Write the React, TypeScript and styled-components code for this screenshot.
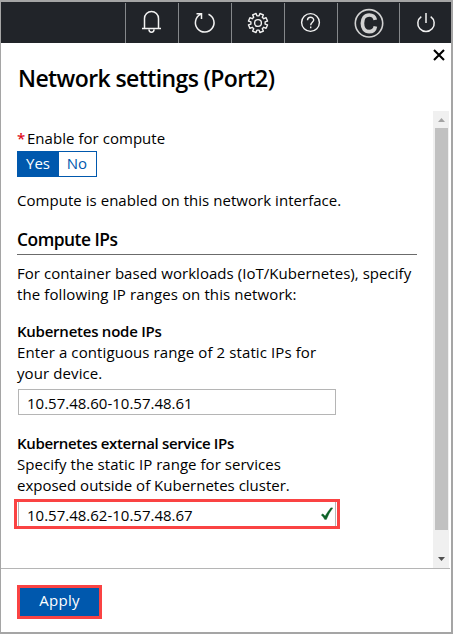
import React from "react";
import styled, { createGlobalStyle } from "styled-components";

const GlobalStyle = createGlobalStyle`
  * { box-sizing: border-box; }
  body { margin: 0; background: #fff; }
`;

const Frame = styled.div`
  width: 453px;
  height: 634px;
  display: flex;
  flex-direction: column;
  border: solid #a5a5a5;
  border-width: 2px 2px 2px 1px;
  background: #fff;
  color: #000;
  font: 15px/21px "Open Sans", "Noto Sans", sans-serif;
  overflow: hidden;
`;

const TopBar = styled.nav`
  height: 41px;
  flex: none;
  display: flex;
  justify-content: flex-end;
  background: #212429;
`;

const BarItem = styled.div<{ $width: number }>`
  width: ${(p) => p.$width}px;
  height: 40px;
  margin-top: 1px;
  border-left: 1px solid #85888b;
  svg { display: block; }
`;

const Header = styled.header`
  height: 68px;
  flex: none;
  display: flex;
  justify-content: space-between;
  padding: 5px 5px 0 17px;
`;

const Title = styled.h1<{ $spacing: number }>`
  margin: 13px 0 0;
  font-size: 23px;
  line-height: 34px;
  font-weight: 600;
  letter-spacing: ${(p) => p.$spacing}px;
  white-space: nowrap;
`;

const Scroller = styled.main`
  height: 457px;
  flex: none;
  display: flex;
  justify-content: space-between;
  padding-right: 1px;
`;

const Content = styled.div`
  width: 416px;
  padding: 17px 0 0 16px;
`;

const Line = styled.div<{ $spacing?: number; $bold?: boolean }>`
  height: 21px;
  white-space: nowrap;
  letter-spacing: ${(p) => p.$spacing ?? (p.$bold ? -0.34 : 0.04)}px;
  font-weight: ${(p) => (p.$bold ? 600 : 400)};
`;

const Required = styled.span`
  color: #e00b1c;
  display: inline-block;
  width: 10px;
  font-weight: 600;
`;

const Toggle = styled.div`
  width: 80px;
  height: 26px;
  margin: 2px 0 13px;
  display: flex;
  border: 1px solid #0058ad;
`;

const Option = styled.div<{ $active?: boolean }>`
  width: ${(p) => (p.$active ? 41 : 37)}px;
  height: 24px;
  padding-right: 1px;
  line-height: 22px;
  text-align: center;
  color: ${(p) => (p.$active ? "#fff" : "#0058ad")};
  background: ${(p) => (p.$active ? "#0058ad" : "#fff")};
`;

const Section = styled.h2<{ $spacing: number }>`
  width: 400px;
  height: 27px;
  margin: 17px 0 8px;
  border-bottom: 1px solid #6b6b6b;
  font-size: 17.4px;
  line-height: 22px;
  font-weight: 600;
  letter-spacing: ${(p) => p.$spacing}px;
`;

const Group = styled.section<{ $gap?: number }>`
  margin-top: ${(p) => p.$gap ?? 16}px;
`;

const Field = styled.div`
  width: 318px;
  height: 26px;
  margin: 5px 0 0 1px;
  padding: 0 2px 0 8px;
  display: flex;
  justify-content: space-between;
  border: 1px solid #b5b5b5;
  line-height: 27px;
`;

const Highlight = styled.div`
  width: 326px;
  height: 30px;
  margin: 3px 0 0 -3px;
  border: 3px solid #fa4343;
  padding: 0 1px;
`;

const HighlightedField = styled(Field)`
  height: 24px;
  margin: 0;
  border-width: 0 1px;
`;

const Track = styled.div`
  width: 16px;
  height: 457px;
  margin-right: 1px;
  background: #f0f0f0;
  display: flex;
  flex-direction: column;
`;

const Thumb = styled.div`
  width: 13px;
  height: 402px;
  background: #c1c1c1;
  margin-left: 2px;
`;

const Footer = styled.footer`
  flex: 1;
  margin-right: 1px;
  padding: 16px 0 0 16px;
  border-top: 1px solid #b5b5b5;
`;

const ApplyButton = styled.button`
  display: block;
  width: 85px;
  height: 34px;
  padding: 0 0 3px;
  border: 3px solid #fa4343;
  border-radius: 0;
  background: #0058ad;
  color: #fff;
  font: 15px/25px "Open Sans", "Noto Sans", sans-serif;
  letter-spacing: 0.3px;
`;

const stroke = { fill: "none", stroke: "#f2f2f2", strokeWidth: 1.5 };

const Bell = () => (
  <svg width="52" height="40" {...stroke}>
    <path d="M16 25.5H35M18.5 25V15.5A7 7 0 0 1 32.5 15.5V25M23 26.5C23 30 28 30 28 26.5" />
  </svg>
);

const Refresh = () => (
  <svg width="52" height="40" {...stroke}>
    <path d="M29.5 11.2A9.3 9.3 0 1 1 21.5 11.4M17.5 10.8H22.5V16" />
  </svg>
);

const gearPath = (() => {
  const pts: string[] = [];
  for (let i = 0; i < 8; i++) {
    const spots: [number, number][] = [[-14, 7.2], [-11, 9.7], [11, 9.7], [14, 7.2]];
    for (const [deg, r] of spots) {
      const a = ((i * 45 + 22.5 + deg) * Math.PI) / 180;
      pts.push(`${(26 + r * Math.cos(a)).toFixed(2)} ${(20 + r * Math.sin(a)).toFixed(2)}`);
    }
  }
  return `M${pts.join("L")}Z`;
})();

const Gear = () => (
  <svg width="52" height="40" {...stroke} strokeWidth={1.4} strokeLinejoin="round">
    <path d={gearPath} />
    <circle cx="26" cy="20" r="3.4" />
  </svg>
);

const Help = () => (
  <svg width="52" height="40" {...stroke} strokeWidth={1.4}>
    <circle cx="25.5" cy="19.5" r="8.9" />
    <path d="M22.5 17.3C22.5 13.2 28.7 13.4 28.7 17C28.7 19.2 25.7 19.3 25.7 22.2M25.7 23.5V25.2" />
  </svg>
);

const Copyright = () => (
  <svg width="61" height="40" fill="none" stroke="#d2d2d2">
    <circle cx="31" cy="20.3" r="13.7" strokeWidth="1.6" />
    <path d="M37.3 16.8C36.6 13.6 34.2 12 31.2 12C26.8 12 24.4 15.3 24.4 20.3C24.4 25.3 26.8 28.7 31.2 28.7C34.5 28.7 36.8 26.8 37.4 23.4" strokeWidth="3.7" />
  </svg>
);

const Power = () => (
  <svg width="51" height="40" {...stroke}>
    <path d="M21.3 13.7A8.2 8.2 0 1 0 30.7 13.7M26 10V20" />
  </svg>
);

const Close = () => (
  <svg width="14" height="14" stroke="#000" strokeWidth="2.1">
    <path d="M2 2L12 12M12 2L2 12" />
  </svg>
);

const Check = () => (
  <svg width="12" height="14" viewBox="0 0 12 14">
    <path d="M.2 8L1.9 6.8L4.1 9.1Q7 4.2 9.9.8L11.9.9Q7.9 5.8 5.4 12.5H3.7Q2.4 9.7.2 8Z" fill="#0e6328" stroke="#0e6328" strokeWidth=".3" />
  </svg>
);

const CheckSlot = styled.span`
  display: block;
  padding-top: 5px;
  svg { display: block; }
`;

const Arrow = styled.svg`
  display: block;
  flex: none;
`;

export default function App() {
  return (
    <Frame>
      <GlobalStyle />
      <TopBar>
        <BarItem $width={53}><Bell /></BarItem>
        <BarItem $width={53}><Refresh /></BarItem>
        <BarItem $width={53}><Gear /></BarItem>
        <BarItem $width={53}><Help /></BarItem>
        <BarItem $width={62}><Copyright /></BarItem>
        <BarItem $width={52}><Power /></BarItem>
      </TopBar>
      <Header>
        <Title $spacing={-0.6}>Network settings (Port2)</Title>
        <Close />
      </Header>
      <Scroller>
        <Content>
          <Line><Required>*</Required>Enable for compute</Line>
          <Toggle>
            <Option $active>Yes</Option>
            <Option>No</Option>
          </Toggle>
          <Line>Compute is enabled on this network interface.</Line>
          <Section $spacing={-0.5}>Compute IPs</Section>
          <Line>For container based workloads (IoT/Kubernetes), specify</Line>
          <Line $spacing={0.1}>the following IP ranges on this network:</Line>
          <Group>
            <Line $bold $spacing={-0.24}>Kubernetes node IPs</Line>
            <Line $spacing={0.1}>Enter a contiguous range of 2 static IPs for</Line>
            <Line $spacing={0.1}>your device.</Line>
            <Field>10.57.48.60-10.57.48.61</Field>
          </Group>
          <Group $gap={18}>
            <Line $bold>Kubernetes external service IPs</Line>
            <Line>Specify the static IP range for services</Line>
            <Line $spacing={0}>exposed outside of Kubernetes cluster.</Line>
            <Highlight>
              <HighlightedField>
                10.57.48.62-10.57.48.67
                <CheckSlot><Check /></CheckSlot>
              </HighlightedField>
            </Highlight>
          </Group>
        </Content>
        <Track>
          <Arrow width="16" height="17"><path d="M5 11L8.5 7L12 11Z" fill="#a3a3a3" /></Arrow>
          <Thumb />
          <Arrow width="16" height="38"><path d="M5 27L8.5 31L12 27Z" fill="#505050" /></Arrow>
        </Track>
      </Scroller>
      <Footer><ApplyButton>Apply</ApplyButton></Footer>
    </Frame>
  );
}
